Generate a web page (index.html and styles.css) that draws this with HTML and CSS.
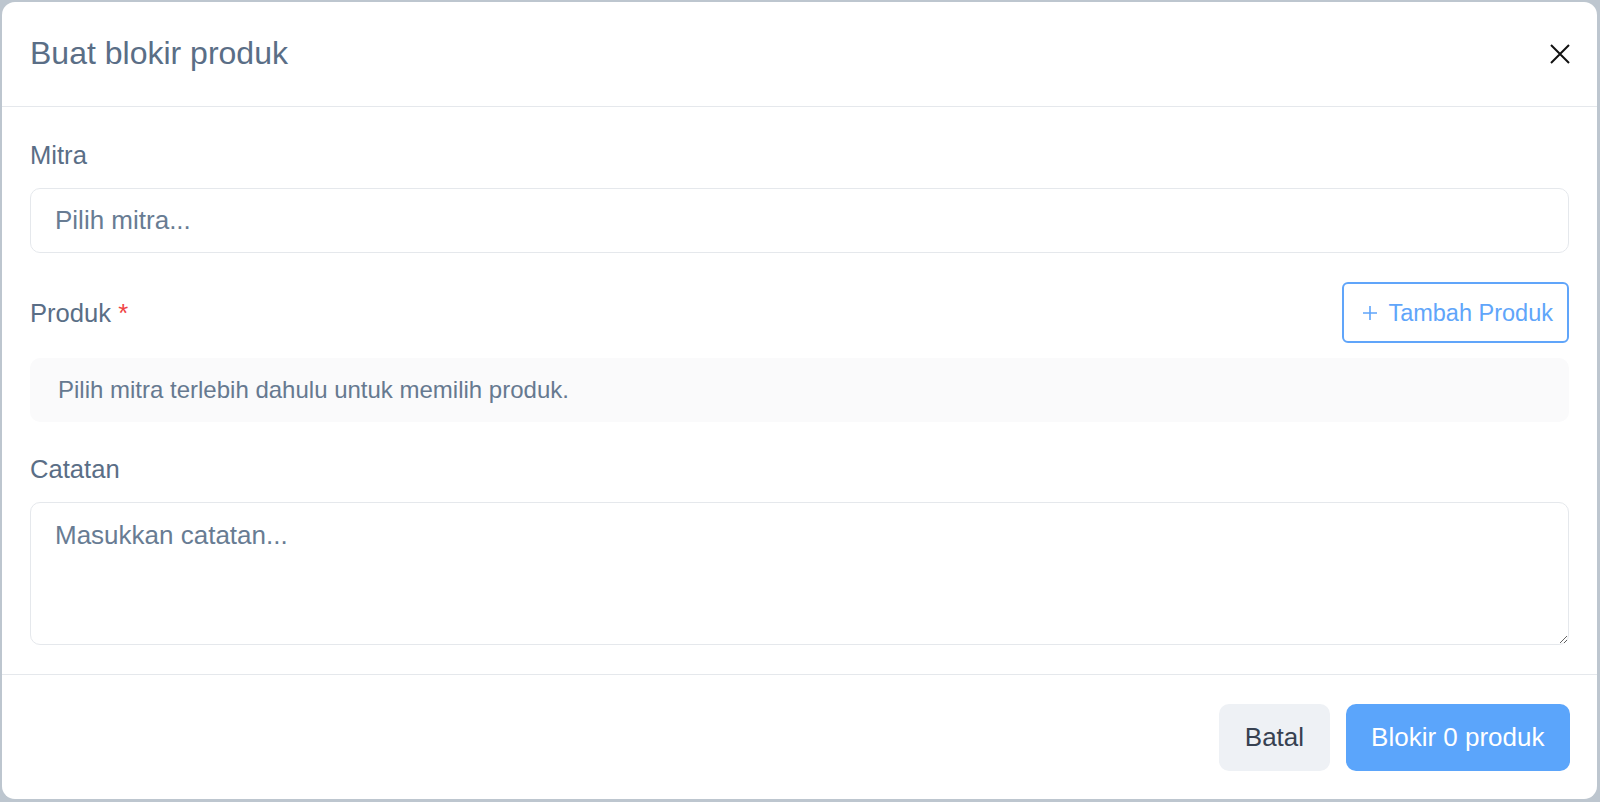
FILE: index.html
```html
<!DOCTYPE html>
<html lang="id">
<head>
<meta charset="utf-8">
<title>Buat blokir produk</title>
<link rel="stylesheet" href="styles.css">
</head>
<body>
<div class="backdrop">
  <div class="modal">
    <header class="modal-header">
      <h2 class="modal-title">Buat blokir produk</h2>
      <button class="close" type="button" aria-label="Tutup">
        <svg width="20" height="20" viewBox="0 0 20 20"><path d="M1 1L19 19M19 1L1 19" stroke="#111" stroke-width="2" fill="none"/></svg>
      </button>
    </header>
    <div class="modal-body">
      <div class="field">
        <label class="label">Mitra</label>
        <div class="select"><span class="placeholder">Pilih mitra...</span></div>
      </div>
      <div class="field">
        <div class="row">
          <label class="label label-inline">Produk <span class="req">*</span></label>
          <button class="btn-outline" type="button">
            <svg class="plus" width="14" height="14" viewBox="0 0 14 14"><path d="M7 0V14M0 7H14" stroke="#60a5fa" stroke-width="1.6" fill="none"/></svg>
            Tambah Produk
          </button>
        </div>
        <div class="info">Pilih mitra terlebih dahulu untuk memilih produk.</div>
      </div>
      <div class="field">
        <label class="label">Catatan</label>
        <textarea class="textarea" placeholder="Masukkan catatan..."></textarea>
      </div>
    </div>
    <footer class="modal-footer">
      <button class="btn btn-secondary" type="button">Batal</button>
      <button class="btn btn-primary" type="button">Blokir 0 produk</button>
    </footer>
  </div>
</div>
</body>
</html>
```

FILE: styles.css
```css
* { box-sizing: border-box; }

html, body {
  margin: 0;
  height: 802px;
  overflow: hidden;
}

body {
  background: #bdc6cf;
  font-family: "Liberation Sans", Arial, sans-serif;
}

.backdrop {
  padding: 2px 3px 3px 2px;
  height: 802px;
}

.modal {
  height: 797px;
  background: #ffffff;
  border-radius: 13px;
  display: flex;
  flex-direction: column;
  overflow: hidden;
}

.modal-header {
  height: 105px;
  flex: none;
  display: flex;
  align-items: center;
  justify-content: space-between;
  padding: 0 27px 1px 28px;
  border-bottom: 1px solid #e5e8ec;
}

.modal-title {
  margin: 0;
  font-size: 32px;
  font-weight: 400;
  color: #5a6e86;
}

.close {
  border: 0;
  background: none;
  padding: 0;
  width: 20px;
  height: 20px;
  display: flex;
}

.modal-body {
  flex: 1;
  padding: 29px 28px 29px 28px;
  display: flex;
  flex-direction: column;
  gap: 28.5px;
}

.field {
  display: flex;
  flex-direction: column;
}

.label {
  display: block;
  font-size: 25.6px;
  line-height: 38.4px;
  margin-bottom: 13.6px;
  color: #5a6e86;
}

.label-inline {
  margin-bottom: 0;
  padding-top: 2px;
}

.req {
  color: #ef4444;
}

.select {
  height: 65px;
  border: 1px solid #e5e8ec;
  border-radius: 10px;
  padding: 0 24px;
  display: flex;
  align-items: center;
  font-size: 26px;
}

.placeholder {
  color: #687c93;
}

.row {
  display: flex;
  align-items: center;
  justify-content: space-between;
  height: 61px;
  margin-bottom: 15px;
}

.btn-outline {
  height: 61px;
  border: 2px solid #60a5fa;
  border-radius: 6px;
  background: #ffffff;
  color: #60a5fa;
  font-family: "Liberation Sans", Arial, sans-serif;
  font-size: 23.5px;
  padding: 2px 14px 0 19px;
  display: flex;
  align-items: center;
}

.plus {
  margin-right: 11px;
}

.info {
  height: 64px;
  background: #fafafb;
  border-radius: 10px;
  padding: 0 28px;
  display: flex;
  align-items: center;
  font-size: 24px;
  color: #667990;
}

.textarea {
  height: 143px;
  border: 1px solid #e5e8ec;
  border-radius: 10px;
  padding: 13px 24px;
  font-family: "Liberation Sans", Arial, sans-serif;
  font-size: 26px;
  line-height: 38.4px;
  color: #334155;
  outline: none;
}

.textarea::placeholder {
  color: #687c93;
}

.modal-footer {
  flex: none;
  height: 125px;
  border-top: 1px solid #e5e8ec;
  padding: 29px 27px 28px 28px;
  display: flex;
  justify-content: flex-end;
  gap: 16px;
}

.btn {
  height: 67px;
  border: 0;
  border-radius: 10px;
  font-family: "Liberation Sans", Arial, sans-serif;
  font-size: 26px;
  padding: 0 25.5px;
}

.btn-secondary {
  background: #eef1f5;
  color: #374151;
}

.btn-primary {
  background: #5ba5fb;
  color: #ffffff;
}
```
